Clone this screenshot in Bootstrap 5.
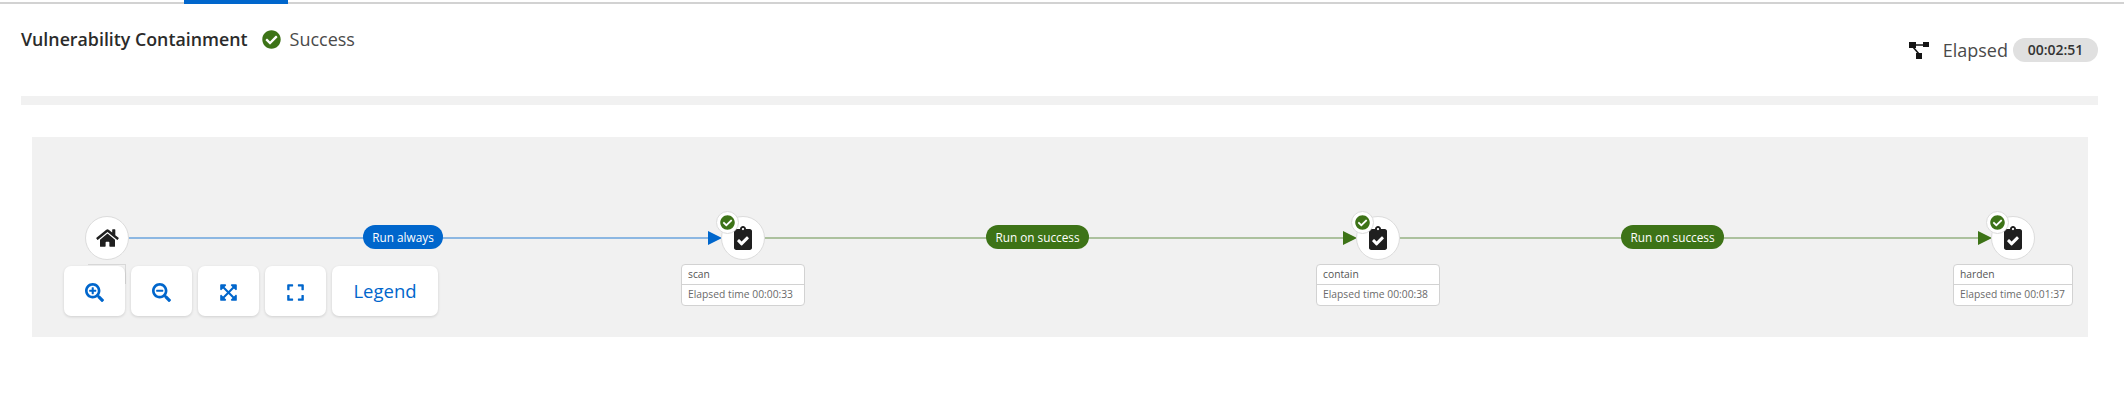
<!DOCTYPE html>
<html>
<head>
    <meta charset="utf-8">
    <title>Vulnerability Containment</title>
    <link href="https://cdn.jsdelivr.net/npm/bootstrap@5.3.0/dist/css/bootstrap.min.css" rel="stylesheet">
    <style>
        body { font-family: "Open Sans", "Liberation Sans", sans-serif; color: #151515; background: #fff; }

        /* tab strip + header */
        .tab-strip { height: 4px; border-bottom: 2px solid #d2d2d2; }
        .tab-active { width: 104px; height: 4px; margin-left: 184px; background: #0066cc; }
        .job-head { height: 92px; padding: 0 26px 0 21px; }
        .job-title { margin-top: 22px; font-size: 17.8px; font-weight: 600; color: #2b2b2b; line-height: 26px; }
        .job-status { margin-top: 22px; font-size: 18px; color: #4a4a4a; line-height: 26px; }
        .job-status svg { width: 19px; height: 19px; fill: #3d7317; margin: 0 9px 0 14px; }
        .job-elapsed { margin-top: 34px; font-size: 18px; color: #4a4a4a; height: 24px; }
        .job-elapsed > svg { width: 20px; height: 17px; margin-right: 14px; }
        .time-pill { background: #e0e0e0; color: #333; font-size: 14px; font-weight: 600; line-height: 24px; width: 85px; margin-left: 5px; text-align: center; }
        .gray-bar { height: 9px; margin: 0 26px 0 21px; background: #f1f1f1; }

        /* graph */
        .graph-area { height: 200px; margin: 32px 36px 0 32px; background: #f1f1f1; }
        .edges { left: 0; top: 0; }
        .graph-node { width: 44px; height: 44px; top: 79px; background: #fff; border: 1px solid #dcdcdc; }
        .home-node { left: 53px; }
        .scan-node { left: 689px; }
        .contain-node { left: 1324px; }
        .harden-node { left: 1959px; }
        .graph-node > svg { fill: #1f1f1f; }
        .home-node > svg { width: 23px; height: 20px; }
        .job-node-icon { width: 18px; height: 24px; }
        .node-badge { width: 23px; height: 23px; left: -6px; top: -6px; background: #fff; border: 1px solid #dcdcdc; border-radius: 50%; }
        .node-badge svg { width: 15px; height: 15px; fill: #3d7317; }
        .node-label { width: 124px; top: 127px; font-size: 10.3px; color: #6a6a6a; line-height: 19px; border: 1px solid #d2d2d2; border-radius: 4px; background: #fff; white-space: nowrap; }
        .node-label > div { padding: 0 6px; height: 20px; }
        .node-label > div:first-child { border-bottom: 1px solid #d2d2d2; color: #555; }
        .scan-label { left: 649px; }
        .contain-label { left: 1284px; }
        .harden-label { left: 1921px; width: 120px; }
        .edge-pill { top: 88px; height: 24px; line-height: 24px; padding: 0; font-size: 11.8px; font-weight: 400; color: #fff; }
        .pill-always { left: 331px; width: 80px; background: #0066cc; }
        .pill-success-one { left: 954px; width: 103px; background: #3d7317; }
        .pill-success-two { left: 1589px; width: 103px; background: #3d7317; }

        /* controls */
        .graph-controls { left: 32px; top: 129px; gap: 6px; }
        .ctl-btn { width: 61px; height: 50px; padding: 0; background: #fff; border: 0; border-radius: 7px; color: #0066cc; box-shadow: 0 1px 3px rgba(0,0,0,.14); }
        .ctl-btn:hover { background: #fff; color: #0066cc; }
        .ctl-btn svg { width: 19px; height: 19px; fill: #0066cc; }
        .ctl-wide { width: 106px; font-size: 18.5px; }
        .ghost-tip { left: 56px; top: 127px; width: 38px; height: 20px; border: 1px solid #d8d8d8; border-bottom: 0; border-left: 0; }
    </style>
</head>
<body>
    <svg width="0" height="0" class="d-block position-absolute">
        <symbol id="ic-check" viewBox="0 0 512 512"><path d="M504 256c0 136.967-111.033 248-248 248S8 392.967 8 256 119.033 8 256 8s248 111.033 248 248zM227.314 387.314l184-184c6.248-6.248 6.248-16.379 0-22.627l-22.627-22.627c-6.248-6.249-16.379-6.249-22.628 0L216 308.118l-70.059-70.059c-6.248-6.248-16.379-6.248-22.628 0l-22.627 22.627c-6.248 6.248-6.248 16.379 0 22.627l104 104c6.249 6.249 16.379 6.249 22.628.001z"/></symbol>
        <symbol id="ic-clipboard" viewBox="0 0 384 512"><path d="M336 64h-80c0-35.3-28.7-64-64-64s-64 28.7-64 64H48C21.5 64 0 85.5 0 112v352c0 26.5 21.5 48 48 48h288c26.5 0 48-21.5 48-48V112c0-26.5-21.5-48-48-48zM192 40c13.3 0 24 10.7 24 24s-10.7 24-24 24-24-10.7-24-24 10.7-24 24-24zm121.2 231.8l-143 141.8c-4.7 4.7-12.3 4.6-17-.1l-82.6-83.3c-4.7-4.7-4.6-12.3.1-17L99.1 285c4.7-4.7 12.3-4.6 17 .1l46 46.4 106-105.2c4.7-4.7 12.3-4.6 17 .1l28.2 28.4c4.7 4.8 4.6 12.3-.1 17z"/></symbol>
    </svg>

    <div class="tab-strip"><div class="tab-active"></div></div>

    <div class="job-head d-flex justify-content-between align-items-start">
        <div class="d-flex align-items-center">
            <span class="job-title">Vulnerability Containment</span>
            <span class="job-status d-flex align-items-center">
                <svg><use href="#ic-check"/></svg>Success
            </span>
        </div>
        <div class="job-elapsed d-flex align-items-center">
            <svg viewBox="0 0 20 17">
                <rect x="0" y="0" width="7" height="6" fill="#151515"/>
                <rect x="14" y="0" width="6" height="5" fill="#151515"/>
                <rect x="7" y="11" width="6" height="6" fill="#151515"/>
                <path d="M3 3H17M4 5L10 12" stroke="#151515" stroke-width="1.6" fill="none"/>
            </svg>
            Elapsed
            <span class="time-pill rounded-pill">00:02:51</span>
        </div>
    </div>
    <div class="gray-bar"></div>

    <div class="graph-area position-relative">
        <svg class="edges position-absolute" width="2056" height="200">
            <line x1="96" y1="101" x2="676" y2="101" stroke="#0066cc" stroke-opacity=".42" stroke-width="2"/>
            <polygon points="676,94 690,101 676,108" fill="#0066cc"/>
            <line x1="732" y1="101" x2="1311" y2="101" stroke="#3d7317" stroke-opacity=".38" stroke-width="2"/>
            <polygon points="1311,94 1325,101 1311,108" fill="#3d7317"/>
            <line x1="1367" y1="101" x2="1946" y2="101" stroke="#3d7317" stroke-opacity=".38" stroke-width="2"/>
            <polygon points="1946,94 1960,101 1946,108" fill="#3d7317"/>
        </svg>

        <span class="edge-pill pill-always badge rounded-pill position-absolute">Run always</span>
        <span class="edge-pill pill-success-one badge rounded-pill position-absolute">Run on success</span>
        <span class="edge-pill pill-success-two badge rounded-pill position-absolute">Run on success</span>

        <div class="graph-node home-node rounded-circle position-absolute d-flex align-items-center justify-content-center">
            <svg viewBox="0 0 576 512"><path d="M280.37 148.26L96 300.11V464a16 16 0 0 0 16 16l112.06-.29a16 16 0 0 0 15.92-16V368a16 16 0 0 1 16-16h64a16 16 0 0 1 16 16v95.64a16 16 0 0 0 16 16.05L464 480a16 16 0 0 0 16-16V300L295.67 148.26a12.19 12.19 0 0 0-15.3 0zM571.6 251.47L488 182.56V44.05a12 12 0 0 0-12-12h-56a12 12 0 0 0-12 12v72.61L318.47 43a48 48 0 0 0-61 0L4.34 251.47a12 12 0 0 0-1.6 16.9l25.5 31A12 12 0 0 0 45.15 301l235.22-193.74a12.19 12.19 0 0 1 15.3 0L530.9 301a12 12 0 0 0 16.9-1.6l25.5-31a12 12 0 0 0-1.7-16.93z"/></svg>
        </div>

        <div class="graph-node scan-node rounded-circle position-absolute d-flex align-items-center justify-content-center">
            <svg class="job-node-icon"><use href="#ic-clipboard"/></svg>
            <span class="node-badge position-absolute d-flex align-items-center justify-content-center"><svg><use href="#ic-check"/></svg></span>
        </div>
        <div class="node-label scan-label position-absolute">
            <div>scan</div>
            <div>Elapsed time 00:00:33</div>
        </div>

        <div class="graph-node contain-node rounded-circle position-absolute d-flex align-items-center justify-content-center">
            <svg class="job-node-icon"><use href="#ic-clipboard"/></svg>
            <span class="node-badge position-absolute d-flex align-items-center justify-content-center"><svg><use href="#ic-check"/></svg></span>
        </div>
        <div class="node-label contain-label position-absolute">
            <div>contain</div>
            <div>Elapsed time 00:00:38</div>
        </div>

        <div class="graph-node harden-node rounded-circle position-absolute d-flex align-items-center justify-content-center">
            <svg class="job-node-icon"><use href="#ic-clipboard"/></svg>
            <span class="node-badge position-absolute d-flex align-items-center justify-content-center"><svg><use href="#ic-check"/></svg></span>
        </div>
        <div class="node-label harden-label position-absolute">
            <div>harden</div>
            <div>Elapsed time 00:01:37</div>
        </div>

        <div class="ghost-tip position-absolute"></div>
        <div class="graph-controls position-absolute d-flex">
            <button type="button" class="btn ctl-btn"><svg viewBox="0 0 512 512"><path d="M304 192v32c0 6.6-5.4 12-12 12h-56v56c0 6.6-5.4 12-12 12h-32c-6.6 0-12-5.4-12-12v-56h-56c-6.6 0-12-5.4-12-12v-32c0-6.6 5.4-12 12-12h56v-56c0-6.6 5.4-12 12-12h32c6.6 0 12 5.4 12 12v56h56c6.6 0 12 5.4 12 12zm201 284.7L476.7 505c-9.4 9.4-24.6 9.4-33.9 0L343 405.3c-4.5-4.5-7-10.6-7-17V372c-35.3 27.6-79.7 44-128 44C93.1 416 0 322.9 0 208S93.1 0 208 0s208 93.1 208 208c0 48.3-16.4 92.7-44 128h16.3c6.4 0 12.5 2.5 17 7l99.7 99.7c9.3 9.4 9.3 24.6 0 34zM344 208c0-75.2-60.8-136-136-136S72 132.8 72 208s60.8 136 136 136 136-60.8 136-136z"/></svg></button>
            <button type="button" class="btn ctl-btn"><svg viewBox="0 0 512 512"><path d="M304 192v32c0 6.6-5.4 12-12 12H124c-6.6 0-12-5.4-12-12v-32c0-6.6 5.4-12 12-12h168c6.6 0 12 5.4 12 12zm201 284.7L476.7 505c-9.4 9.4-24.6 9.4-33.9 0L343 405.3c-4.5-4.5-7-10.6-7-17V372c-35.3 27.6-79.7 44-128 44C93.1 416 0 322.9 0 208S93.1 0 208 0s208 93.1 208 208c0 48.3-16.4 92.7-44 128h16.3c6.4 0 12.5 2.5 17 7l99.7 99.7c9.3 9.4 9.3 24.6 0 34zM344 208c0-75.2-60.8-136-136-136S72 132.8 72 208s60.8 136 136 136 136-60.8 136-136z"/></svg></button>
            <button type="button" class="btn ctl-btn"><svg viewBox="0 0 448 512"><path d="M448 344v112a23.94 23.94 0 0 1-24 24H312c-21.39 0-32.09-25.9-17-41l36.2-36.2L224 295.6 116.77 402.9 153 439c15.09 15.1 4.39 41-17 41H24a23.94 23.94 0 0 1-24-24V344c0-21.4 25.89-32.1 41-17l36.19 36.2L184.46 256 77.18 148.7 41 185c-15.1 15.1-41 4.4-41-17V56a23.94 23.94 0 0 1 24-24h112c21.39 0 32.09 25.9 17 41l-36.2 36.2L224 216.4l107.23-107.3L295 73c-15.09-15.1-4.39-41 17-41h112a23.94 23.94 0 0 1 24 24v112c0 21.4-25.89 32.1-41 17l-36.19-36.2L263.54 256l107.28 107.3L407 327.1c15.1-15.2 41-4.5 41 16.9z"/></svg></button>
            <button type="button" class="btn ctl-btn"><svg viewBox="0 0 448 512"><path d="M0 180V56c0-13.3 10.7-24 24-24h124c6.6 0 12 5.4 12 12v40c0 6.6-5.4 12-12 12H64v84c0 6.6-5.4 12-12 12H12c-6.6 0-12-5.4-12-12zM288 44v40c0 6.6 5.4 12 12 12h84v84c0 6.6 5.4 12 12 12h40c6.6 0 12-5.4 12-12V56c0-13.3-10.7-24-24-24H300c-6.6 0-12 5.4-12 12zm148 276h-40c-6.6 0-12 5.4-12 12v84h-84c-6.6 0-12 5.4-12 12v40c0 6.6 5.4 12 12 12h124c13.3 0 24-10.7 24-24V332c0-6.6-5.4-12-12-12zM160 468v-40c0-6.6-5.4-12-12-12H64v-84c0-6.6-5.4-12-12-12H12c-6.6 0-12 5.4-12 12v124c0 13.3 10.7 24 24 24h124c6.6 0 12-5.4 12-12z"/></svg></button>
            <button type="button" class="btn ctl-btn ctl-wide">Legend</button>
        </div>
    </div>

    <script src="https://cdn.jsdelivr.net/npm/bootstrap@5.3.0/dist/js/bootstrap.bundle.min.js"></script>
</body>
</html>
